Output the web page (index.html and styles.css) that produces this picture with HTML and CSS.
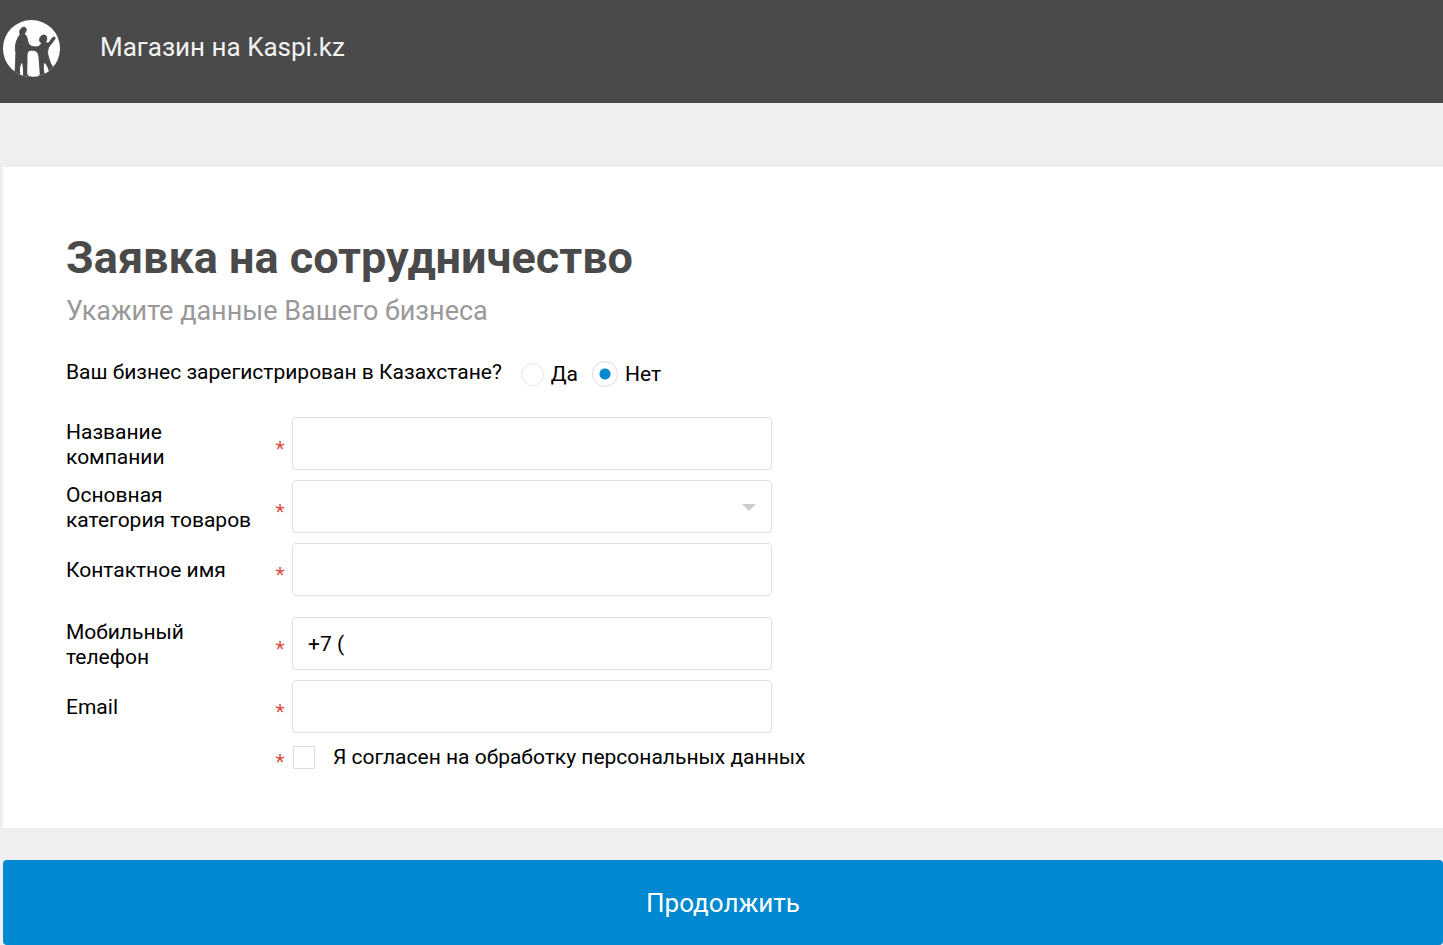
FILE: index.html
```html
<!DOCTYPE html>
<html lang="ru">
<head>
<meta charset="utf-8">
<title>Магазин на Kaspi.kz</title>
<link rel="stylesheet" href="styles.css">
</head>
<body>
<header class="header">
  <svg class="logo" viewBox="9 29 172 172" aria-hidden="true">
    <defs><clipPath id="disc"><circle cx="95" cy="115" r="86"/></clipPath></defs>
    <circle cx="95" cy="115" r="86" fill="#fff"/>
    <g clip-path="url(#disc)">
      <path fill="#4a4a4a" stroke="#4a4a4a" stroke-width="3" stroke-linejoin="round" d="M70 51 C76 49 80 54 79 60 C78 65 74 68 74 72 C80 75 81 82 83 90 C85 99 88 106 95 108 C103 111 111 111 118 108 C122 104 125 102 126 99 C118 96 118 86 122 80 C127 73 138 73 140 79 C142 86 141 91 138 95 C142 101 148 99 151 92 L158 83 C163 78 168 81 166 86 L149 108 C144 115 143 124 144 133 C146 143 150 151 153 161 L163 178 L145 210 L45 210 L45 186 C48 165 47 145 48 127 C44 116 47 99 52 88 C55 80 58 77 61 72 C57 65 60 54 70 51 Z"/>
      <path fill="#4a4a4a" d="M41 184 L46 184 L46 206 L41 206 Z"/>
      <path fill="#fff" d="M66 158 C60 167 59 180 61 194 L64 206 L69 206 C70 184 70 170 66 158 Z M134 158 C131 168 132 179 134 188 L138 200 L148 187 C145 174 141 164 134 158 Z"/>
      <path fill="#fff" d="M96 122 C84 122 83 128 83 139 L82 190 C82 204 119 204 120 192 L116 140 C114 126 109 122 96 122 Z"/>
    </g>
  </svg>
  <span class="brand">Магазин на Kaspi.kz</span>
</header>
<main class="page">
  <form class="application">
    <section class="card">
      <h1 class="title">Заявка на сотрудничество</h1>
      <p class="subtitle">Укажите данные Вашего бизнеса</p>
      <div class="question" role="radiogroup" aria-labelledby="registered">
        <span class="question-text" id="registered">Ваш бизнес зарегистрирован в Казахстане?</span>
        <label class="option"><input class="radio" type="radio" name="registered" value="yes">Да</label>
        <label class="option"><input class="radio" type="radio" name="registered" value="no" checked>Нет</label>
      </div>
      <div class="fields">
        <div class="row">
          <label class="label" for="company">Название компании</label><span class="star">*</span>
          <input class="control" id="company" type="text">
        </div>
        <div class="row">
          <label class="label" for="category">Основная категория товаров</label><span class="star">*</span>
          <div class="select-box"><select class="control select" id="category"><option></option></select></div>
        </div>
        <div class="row">
          <label class="label" for="contact">Контактное имя</label><span class="star">*</span>
          <input class="control" id="contact" type="text">
        </div>
        <div class="row row-group">
          <label class="label" for="phone">Мобильный телефон</label><span class="star">*</span>
          <input class="control" id="phone" type="tel" value="+7 (">
        </div>
        <div class="row">
          <label class="label" for="email">Email</label><span class="star">*</span>
          <input class="control" id="email" type="email">
        </div>
        <div class="row consent">
          <span class="star">*</span>
          <label class="consent-label"><input class="checkbox" type="checkbox">Я согласен на обработку персональных данных</label>
        </div>
      </div>
    </section>
    <button class="submit" type="submit">Продолжить</button>
  </form>
</main>
</body>
</html>
```
FILE: styles.css
```css
* {
  box-sizing: border-box;
}

body {
  margin: 0;
  background: #efefef;
  color: #000;
  font: 21px/25px Roboto, "Liberation Sans", sans-serif;
}

.header {
  display: flex;
  align-items: center;
  gap: 40px;
  padding: 20px 3px 26px;
  background: #4a4a4a;
  color: #f3f3f3;
}

.logo {
  width: 57px;
  height: 57px;
}

.brand {
  padding-bottom: 4px;
  font-size: 26px;
  line-height: 32px;
}

.page {
  padding: 64px 0 0 3px;
}

.application {
  display: grid;
  gap: 32px;
}

.card {
  padding: 64px 63px 58px;
  background: #fff;
}

.title {
  margin: 0;
  color: #4a4a4a;
  font-size: 45px;
  line-height: 54px;
  font-weight: 700;
}

.subtitle {
  margin: 10px 0 34px;
  color: #999;
  font-size: 27px;
  line-height: 32px;
}

.question {
  display: flex;
  align-items: center;
  gap: 14px;
  height: 26px;
}

.question-text {
  margin-right: 5px;
  padding-bottom: 3px;
}

.option {
  display: flex;
  align-items: center;
  gap: 7px;
}

.radio {
  flex: none;
  appearance: none;
  width: 23px;
  height: 23px;
  margin: 0;
  border: 1px solid #e5e5e5;
  border-radius: 50%;
  background: #fff;
}

.radio:checked {
  width: 26px;
  height: 26px;
  border-color: #ddd;
  background: radial-gradient(circle, #0089d0 5px, #fff 6px);
}

.fields {
  display: grid;
  gap: 10px;
  margin-top: 30px;
}

.row {
  display: grid;
  grid-template-columns: 202px 16px minmax(0, 480px);
  column-gap: 4px;
  align-items: center;
}

.row-group {
  margin-top: 11px;
}

.label {
  max-width: 190px;
  padding-top: 2px;
}

.star {
  padding-top: 12px;
  color: #dd4f43;
  text-align: center;
}

.control {
  width: 100%;
  height: 53px;
  padding: 0 15px;
  border: 1px solid #e0e0e0;
  border-radius: 4px;
  background: #fff;
  color: #000;
  font: 21px/25px Roboto, "Liberation Sans", sans-serif;
}

.select-box {
  position: relative;
}

.select-box::after {
  content: "";
  position: absolute;
  top: 24px;
  right: 16px;
  border: 7px solid transparent;
  border-top-color: #ccc;
  border-bottom: 0;
  pointer-events: none;
}

.select {
  display: block;
  appearance: none;
}

.consent {
  grid-template-columns: 16px 1fr;
  margin-top: 2px;
  padding-left: 206px;
}

.consent .star {
  height: 25px;
  padding-top: 5px;
}

.consent-label {
  display: flex;
  align-items: center;
  gap: 18px;
}

.checkbox {
  appearance: none;
  width: 22px;
  height: 23px;
  margin: 0 0 0 1px;
  border: 1px solid #ddd;
  background: #fff;
}

.submit {
  padding: 27px 0 25px;
  border: 0;
  border-radius: 4px;
  background: #0089d0;
  color: #fff;
  font: 26px/33px Roboto, "Liberation Sans", sans-serif;
}
```
